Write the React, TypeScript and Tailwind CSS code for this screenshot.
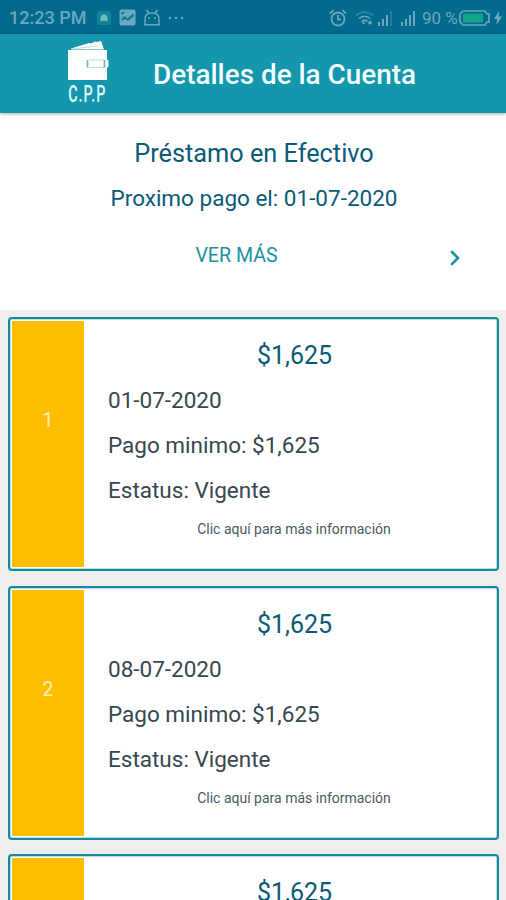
import { ChevronRight } from 'lucide-react';

const payments = [
  { id: 1, date: '01-07-2020', amount: '$1,625', status: 'Vigente' },
  { id: 2, date: '08-07-2020', amount: '$1,625', status: 'Vigente' },
  { id: 3, date: '15-07-2020', amount: '$1,625', status: 'Vigente' },
];

function StatusBar() {
  return (
    <div className="flex h-[34px] items-center bg-[#016a8d] pl-[9px] pr-1 pt-px text-[#6aa9bf]">
      <span className="w-[79px] whitespace-nowrap text-[18px] font-medium leading-5">12:23 PM</span>
      <svg className="ml-2 shrink-0" width="16" height="16" viewBox="0 0 16 16">
        <rect x="1" y="1" width="14" height="14" rx="2" fill="#12819a" />
        <path d="M4.500 11V7l1.500-2 2-1 2 1 1.500 2v4z" fill="#6dbdb9" />
      </svg>
      <svg className="ml-[7px] shrink-0" width="17" height="17" viewBox="0 0 17 17">
        <rect x=".5" y=".5" width="16" height="16" rx="2" fill="currentColor" />
        <path d="M2.500 3h3.500L4 5.500l-1.500.5zM2.500 10l3-3 3 2.500L14.500 4v3.500L9 12 6 10l-3.500 2z" fill="#016a8d" opacity=".85" />
      </svg>
      <svg className="ml-[7px] shrink-0" width="18" height="18" viewBox="0 0 18 18" fill="none" stroke="currentColor" strokeWidth="1.5">
        <path d="M3.500 1l2.500 3.500M14.500 1L12 4.500M2 10c0-4 3-6 7-6s7 2 7 6v5.800H2z" />
        <path d="M6 8v2M12 8v2" />
      </svg>
      <svg className="ml-[7px] shrink-0" width="17" height="4" viewBox="0 0 17 4" fill="currentColor">
        <circle cx="2" cy="2" r="1.300" />
        <circle cx="8" cy="2" r="1.300" />
        <circle cx="14" cy="2" r="1.300" />
      </svg>

      <div className="ml-auto flex shrink-0 items-center">
        <svg width="18" height="18" viewBox="0 0 18 18" fill="none" stroke="currentColor" strokeWidth="1.8">
          <circle cx="9" cy="10" r="6.500" />
          <path d="M9 6v4.500h3M1 4.500L4.500 1.200M17 4.500l-3.500-3.300" />
        </svg>
        <svg className="ml-[8px]" width="19" height="16" viewBox="0 0 19 16" fill="none" stroke="currentColor" strokeWidth="1.7">
          <path d="M1 5.500C6 1 13 1 18 5.500" opacity=".45" />
          <path d="M4 8.500c3-3 8-3 11 0M7 11.500c1.500-1.600 4-1.600 5.500 0" />
          <path d="M9.500 14l-2-2M13 13h4M15 10.500v4" />
        </svg>
        <svg className="ml-[3px]" width="16" height="16" viewBox="0 0 16 16" fill="currentColor">
          <path d="M1 12h2v4H1zM5 9h2v7H5zM9 5h2v11H9z" />
          <path d="M13 1h2v15h-2z" opacity=".3" />
        </svg>
        <svg className="ml-[7px]" width="16" height="16" viewBox="0 0 16 16" fill="currentColor">
          <path d="M1 12h2v4H1zM5 9h2v7H5zM9 5h2v11H9zM13 1h2v15h-2z" />
        </svg>
        <span className="ml-[6px] w-[37px] whitespace-nowrap text-[17px] leading-5">90 %</span>
        <svg width="32" height="16" viewBox="0 0 32 16">
          <path d="M4 1h22l2 3h2v8h-2l-2 3H4l-3-3V4z" fill="none" stroke="currentColor" strokeWidth="1.700" />
          <rect x="4" y="3.500" width="20" height="9" rx="1" fill="#12a587" />
        </svg>
        <svg className="ml-[3px]" width="8" height="14" viewBox="0 0 8 14" fill="currentColor">
          <path d="M5 0L0 8h3L2.500 14 8 5.500H4.800z" />
        </svg>
      </div>
    </div>
  );
}

function Logo() {
  return (
    <div className="mt-[-4px] flex w-[44px] shrink-0 flex-col">
      <svg width="44" height="42" viewBox="0 0 44 42">
        <path d="M4 9.500L22 4l2 .5L28 2.500l2 .5 4-1 3 8.500-33 0z" fill="#fff" />
        <path d="M4 10L31 7" fill="none" stroke="#9ad5da" strokeWidth=".7" />
        <path d="M1 11h39v9.500q1.500 0 1.500 1.500v5q0 1.500-1.500 1.500V41H1z" fill="#fff" />
        <path d="M22 21h15M22 28.500h15" stroke="#b8dedf" strokeWidth="1" />
        <path d="M20.500 21v7.500M37.500 21v7.500" stroke="#6db8b1" strokeWidth="1.700" />
      </svg>
      <div className="h-[24px] w-[72px] origin-left scale-x-[.6] whitespace-nowrap pl-[2px] pt-px text-[24px] font-medium leading-6 tracking-[1.600px] text-[#dffafa]">
        C.P.P
      </div>
    </div>
  );
}

function Header() {
  return (
    <header className="relative flex h-[79px] items-center bg-[#1496ac] pl-[67px] shadow-[0_1px_3px_rgba(0,0,0,0.35)]">
      <Logo />
      <h1 className="ml-[42px] mt-[3px] whitespace-nowrap text-[27.900px] font-medium leading-8 text-[#f0ffff]">
        Detalles de la Cuenta
      </h1>
    </header>
  );
}

function Summary() {
  return (
    <section className="h-[197px] bg-white pt-[25px] text-center text-[#0b5a78]">
      <h2 className="pl-[2px] text-[25.300px] leading-8">Préstamo en Efectivo</h2>
      <p className="mt-[12px] pl-[2px] text-[22.500px] leading-8">Proximo pago el: 01-07-2020</p>
      <div className="mt-[26px] flex items-center pl-[30px] pr-[39px] text-[#1b929f]">
        <span className="flex-1 text-[19.600px] leading-8">VER MÁS</span>
        <ChevronRight className="mt-[3px]" size={24} strokeWidth={2.6} />
      </div>
    </section>
  );
}

type Payment = (typeof payments)[number];

function PaymentCard({ payment }: { payment: Payment }) {
  return (
    <article className="flex h-[254px] shrink-0 rounded-[4px] border-2 border-[#16899a] bg-white p-[2px] shadow-[inset_0_0_0_1px_#b5dfe2]">
      <div className="flex w-[72px] shrink-0 justify-center bg-[#ffbd00] pt-[88px] text-[19.500px] leading-6 text-[#fff0b8]">
        {payment.id}
      </div>
      <div className="flex-1 pl-6 pr-[2px] pt-[19px] text-[22.500px] leading-8 text-[#36474f]">
        <p className="pr-[12px] text-center text-[25px] text-[#0b5a78]">{payment.amount}</p>
        <p className="mt-[12px]">{payment.date}</p>
        <p className="mt-[13px]">Pago minimo: {payment.amount}</p>
        <p className="mt-[13px]">Estatus: {payment.status}</p>
        <p className="mt-[13px] pr-[13px] text-center text-[14px] leading-5 text-[#4a5a60]">Clic aquí para más información</p>
      </div>
    </article>
  );
}

export default function App() {
  return (
    <div className="h-[900px] w-[506px] overflow-hidden bg-[#eeeeee] font-['Roboto',sans-serif]">
      <StatusBar />
      <Header />
      <Summary />
      <main className="flex flex-col gap-[14.500px] pl-[8px] pr-[7px] pt-[7px]">
        {payments.map((payment) => (
          <PaymentCard key={payment.id} payment={payment} />
        ))}
      </main>
    </div>
  );
}
